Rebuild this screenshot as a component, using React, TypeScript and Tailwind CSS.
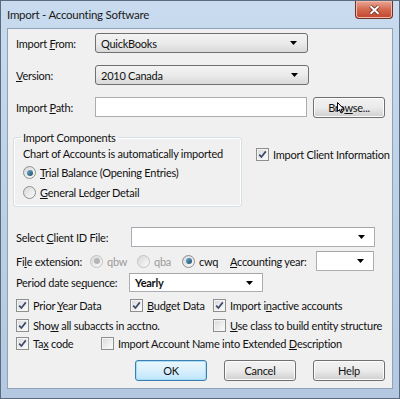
import type { ReactNode } from "react";

const font = { fontFamily: 'Lato, "Open Sans", sans-serif' };

function Arrow() {
  return (
    <svg width="7" height="4" viewBox="0 0 7 4" className="shrink-0">
      <path d="M0 0 H7 L3.5 4 Z" fill="#000" />
    </svg>
  );
}

function ComboBox({ value, width, bold }: { value?: string; width: string; bold?: boolean }) {
  return (
    <div
      className={`flex h-5 items-center justify-between rounded-[3px] border border-[#707070] bg-gradient-to-b from-[#f3f3f3] via-[#ebebeb] to-[#d9d9d9] pl-[5px] pr-[10px] ${width} ${bold ? "font-bold" : ""}`}
    >
      <span>{value}</span>
      <Arrow />
    </div>
  );
}

function EditCombo({ value, width, height = "h-5", bold }: { value?: string; width: string; height?: string; bold?: boolean }) {
  return (
    <div
      className={`flex items-center justify-between border border-[#abadb3] border-t-[#a3a5aa] bg-white pl-[5px] pr-[9px] ${width} ${height} ${bold ? "font-bold" : ""}`}
    >
      <span>{value}</span>
      <Arrow />
    </div>
  );
}

function Check({ checked }: { checked?: boolean }) {
  return (
    <span className="flex h-[13px] w-[13px] shrink-0 items-center justify-center border border-[#8e8f8f] bg-white">
      <span className="flex h-[11px] w-[11px] items-center justify-center border border-[#f4f4f4] bg-gradient-to-br from-[#dcdcdc] to-[#fbfbfb]">
        {checked ? (
          <svg width="9" height="9" viewBox="0 0 9 9">
            <path d="M1.2 4.6 L3.4 7 L7.8 1.4" fill="none" stroke="#3d4a6b" strokeWidth="1.7" />
          </svg>
        ) : null}
      </span>
    </span>
  );
}

function CheckItem({ checked, children, className = "" }: { checked?: boolean; children: ReactNode; className?: string }) {
  return (
    <div className={`flex items-center gap-[4px] ${className}`}>
      <Check checked={checked} />
      <span>{children}</span>
    </div>
  );
}

function Radio({ checked, disabled }: { checked?: boolean; disabled?: boolean }) {
  return (
    <span
      className={`flex h-[13px] w-[13px] shrink-0 items-center justify-center rounded-full border ${disabled ? "border-[#c2c2c2]" : "border-[#8e8f8f]"} bg-gradient-to-br from-[#d8d8d8] to-[#fbfbfb]`}
    >
      {checked ? (
        <span
          className={`h-[6px] w-[6px] rounded-full ${disabled ? "bg-[#b5b5b5]" : "bg-gradient-to-br from-[#6fb0d8] to-[#1c4b66]"}`}
        />
      ) : null}
    </span>
  );
}

function RadioItem({ checked, disabled, children, className = "" }: { checked?: boolean; disabled?: boolean; children: ReactNode; className?: string }) {
  return (
    <div className={`flex items-center gap-[4px] ${disabled ? "text-[#9a9a9a]" : ""} ${className}`}>
      <Radio checked={checked} disabled={disabled} />
      <span>{children}</span>
    </div>
  );
}

function Button({ children, primary }: { children: ReactNode; primary?: boolean }) {
  return (
    <div
      className={`relative flex h-[21px] w-[72px] items-center justify-center rounded-[3px] border ${
        primary
          ? "border-[#3c7fb1] bg-gradient-to-b from-[#eaf6fd] via-[#d9f0fc] to-[#bee6fd] shadow-[inset_0_0_0_1px_#a6dcf5]"
          : "border-[#707070] bg-gradient-to-b from-[#f2f2f2] via-[#ebebeb] to-[#cfcfcf] shadow-[inset_0_0_0_1px_#fcfcfc]"
      }`}
    >
      {children}
    </div>
  );
}

export default function App() {
  return (
    <div
      className="flex h-[399px] w-[400px] flex-col overflow-hidden whitespace-nowrap border border-[#5b6b7e] bg-gradient-to-b from-[#c9dbef] via-[#bcd0e6] to-[#b4c9e1] text-[11px] leading-[15px] tracking-[-0.25px] text-[#111]"
      style={font}
    >
      {/* title bar */}
      <div className="flex h-[27px] shrink-0 items-start justify-between">
        <div className="pl-[6px] pt-[6px] text-[11.5px] text-[#1a1a1a]">Import - Accounting Software</div>
        <div className="mr-[6px] flex h-[18px] w-[38px] items-center justify-center rounded-b-[4px] border border-t-0 border-[#6e3429] bg-gradient-to-b from-[#e9a796] via-[#d3694f] to-[#c1432c] shadow-[inset_0_0_0_1px_#f0b9a8]">
          <svg width="11" height="10" viewBox="0 0 11 10">
            <path d="M1.5 1.2 L9.5 8.8 M9.5 1.2 L1.5 8.8" stroke="#5a2219" strokeWidth="3.4" />
            <path d="M1.5 1.2 L9.5 8.8 M9.5 1.2 L1.5 8.8" stroke="#fff" strokeWidth="2" />
          </svg>
        </div>
      </div>

      {/* client area */}
      <div className="mx-[6px] flex h-[361px] flex-col border border-[#8ea2b9] bg-[#f0f0f0] pl-[8px] pr-[7px]">
        <div className="mt-[4px] flex h-5 items-center">
          <span className="w-[79px]">
            Import <u>F</u>rom:
          </span>
          <ComboBox value="QuickBooks" width="w-[213px]" />
        </div>
        <div className="mt-[12px] flex h-5 items-center">
          <span className="w-[79px]">
            <u>V</u>ersion:
          </span>
          <ComboBox value="2010 Canada" width="w-[214px]" />
        </div>
        <div className="mt-[12px] flex h-5 items-center">
          <span className="w-[79px]">
            Import <u>P</u>ath:
          </span>
          <div className="h-5 w-[213px] border border-[#abadb3] bg-white" />
          <div className="ml-[6px]">
            <Button>
              <span>
                Br<span className="relative">o<svg width="8" height="12" viewBox="0 0 8 12" className="absolute left-[-1px] top-[1px]">
                  <path d="M0.5 0.5 V9.5 L2.6 7.6 L4 11 L5.4 10.4 L4 7.2 L7 7.2 Z" fill="#fff" stroke="#000" strokeWidth="1" />
                </svg></span><u>w</u>se...
              </span>
            </Button>
          </div>
        </div>

        <div className="mt-[13px] flex h-[77px] items-start">
          <fieldset className="-ml-[3px] h-[77px] w-[229px] shrink-0 rounded-[3px] border border-[#d5dfe5] px-[9px] pb-0 shadow-[inset_0_0_0_1px_#fff]">
            <legend className="ml-[-2px] px-[2px]">Import Components</legend>
            <div className="mt-[1px]">Chart of Accounts is automatically imported</div>
            <RadioItem checked className="mt-[4px]">
              <u>T</u>rial Balance (Opening Entries)
            </RadioItem>
            <RadioItem className="mt-[5px]">
              <u>G</u>eneral Ledger Detail
            </RadioItem>
          </fieldset>
          <CheckItem checked className="ml-[14px] mt-[17px]">
            Import Client Information
          </CheckItem>
        </div>

        <div className="mt-[20px] flex h-5 items-center">
          <span className="w-[115px]">
            Select <u>C</u>lient ID File:
          </span>
          <EditCombo width="w-[244px]" />
        </div>

        <div className="mt-[4px] flex h-5 items-center">
          <span className="w-[74px]">
            Fi<u>l</u>e extension:
          </span>
          <RadioItem checked disabled className="w-[47px]">
            qbw
          </RadioItem>
          <RadioItem disabled className="w-[45px]">
            qba
          </RadioItem>
          <RadioItem checked className="w-[48px]">
            cwq
          </RadioItem>
          <span className="w-[86px]">
            <u>A</u>ccounting year:
          </span>
          <EditCombo width="w-[58px]" />
        </div>

        <div className="mt-[2px] flex h-[19px] items-center">
          <span className="w-[113px]">
            Period date se<u>q</u>uence:
          </span>
          <EditCombo value="Yearly" width="w-[134px]" height="h-[19px]" bold />
        </div>

        <div className="mt-[6px] flex h-[15px] items-center">
          <CheckItem checked className="w-[114px]">
            Prior <u>Y</u>ear Data
          </CheckItem>
          <CheckItem checked className="w-[83px]">
            <u>B</u>udget Data
          </CheckItem>
          <CheckItem checked>
            Import i<u>n</u>active accounts
          </CheckItem>
        </div>
        <div className="mt-[5px] flex h-[15px] items-center">
          <CheckItem checked className="w-[197px]">
            Sho<u>w</u> all subaccts in acctno.
          </CheckItem>
          <CheckItem>
            <u>U</u>se class to build entity structure
          </CheckItem>
        </div>
        <div className="mt-[3px] flex h-[15px] items-center">
          <CheckItem checked className="w-[85px]">
            Ta<u>x</u> code
          </CheckItem>
          <CheckItem>
            Import Account Name into Extended <u>D</u>escription
          </CheckItem>
        </div>

        <div className="mt-[9px] flex justify-end gap-[17px]">
          <Button primary>OK</Button>
          <Button>Cancel</Button>
          <Button>Help</Button>
        </div>
      </div>
    </div>
  );
}
